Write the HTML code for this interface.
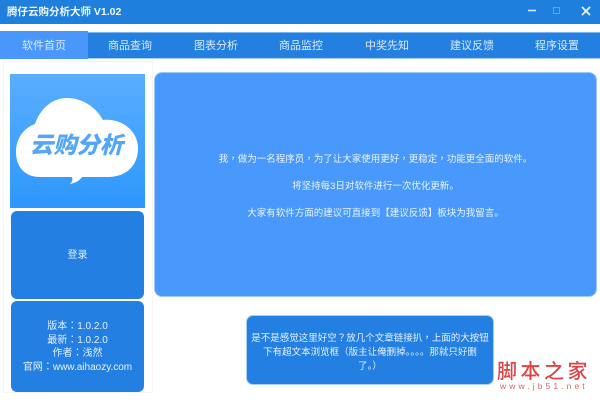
<!DOCTYPE html>
<html><head><meta charset="utf-8"><style>
html,body{margin:0;padding:0;background:#fff}
#r{position:relative;width:600px;height:413px;overflow:hidden;background:#fff;font-family:"Liberation Sans","Noto Sans CJK SC",sans-serif;font-size:10px;color:#e6f1fd;filter:blur(.3px)}
#r div{position:absolute;box-sizing:border-box}
#r i{font-style:normal;font-family:"Noto Sans CJK TC",sans-serif;line-height:0}
.t{top:33px;height:26px;line-height:27px;text-align:center;width:88px;color:#dbe9fa;font-size:11px}
.m{left:155px;width:441px;text-align:center;line-height:16px;color:#eaf3fe;font-size:9.5px;white-space:nowrap}
</style></head><body><div id="r">
<div style="left:0;top:0;width:600px;height:24px;background:#1f7fdc"></div>
<div style="left:7px;top:1px;height:23px;line-height:22px;font-size:10.5px;font-weight:bold;color:#f0f6fd;white-space:nowrap">腾仔云购分析大师 V1.02</div>
<svg style="position:absolute;left:525px;top:0" width="75" height="24">
<path d="M3 10.5H11" stroke="#dcebfb" stroke-width="1.6"/>
<rect x="28.5" y="7.5" width="6" height="6" fill="none" stroke="#5fa5e8"/>
<path d="M57 7L65 15M65 7L57 15" stroke="#e8f2fc" stroke-width="1.8"/>
</svg>
<div style="left:0;top:32px;width:600px;height:27px;background:#2480e0;border-top:1px solid #7db6ef;border-bottom:1px solid #a5cff5"></div>
<div style="left:0;top:31px;width:88px;height:28px;background:#4a97fb"></div>
<div class="t" style="left:0">软件首页</div>
<div class="t" style="left:86px">商品查询</div>
<div class="t" style="left:172px">图表分析</div>
<div class="t" style="left:257px">商品监控</div>
<div class="t" style="left:343px">中奖先知</div>
<div class="t" style="left:428px">建议反馈</div>
<div class="t" style="left:513px">程序设置</div>

<div style="left:3px;top:61px;width:150px;height:332px;border:1px solid #f3f5f8;border-top:1px solid #f0f3f7"></div>
<div style="left:10px;top:74px;width:135px;height:134px;background:linear-gradient(#5aaeff,#2d97fc)"></div>
<svg style="position:absolute;left:10px;top:74px" width="135" height="134">
<path d="M30 103C14 103 6 92 6 78C6 64 14 54 25 50C30 35 42 24 57 24C72 24 86 33 93 46C113 44 128 58 128 74C128 92 116 103 98 103H72C70 106 66 109 60 110C62 108 63 106 62 103Z" fill="#fff"/>
<text x="66.5" y="79" text-anchor="middle" font-family="'Noto Sans CJK SC',sans-serif" font-size="23" font-weight="900" font-style="italic" fill="#55a6f4" textLength="93" lengthAdjust="spacingAndGlyphs">云购分析</text>
</svg>
<div style="left:11px;top:211px;width:133px;height:88px;background:#237fe2;border-radius:6px;text-align:center;line-height:87px;padding-top:1px">登录</div>
<div style="left:11px;top:301px;width:133px;height:91px;background:#237fe2;border-radius:6px;text-align:center;line-height:13.5px;padding-top:19px">版本<i>：</i>1.0.2.0<br>最新<i>：</i>1.0.2.0<br>作者<i>：</i>浅然<br><span style="white-space:nowrap">官网<i>：</i>www.aihaozy.com</span></div>

<div style="left:155px;top:73px;width:441px;height:223px;background:#4899fb;border-radius:7px;box-shadow:0 0 0 1px #9cc8fb"></div>
<div class="m" style="top:152px">我<i>，</i>做为一名程序员<i>，</i>为了让大家使用更好<i>，</i>更稳定<i>，</i>功能更全面的软件。</div>
<div class="m" style="top:179px">将坚持每3日对软件进行一次优化更新。</div>
<div class="m" style="top:206px">大家有软件方面的建议可直接到【建议反馈】板块为我留言。</div>

<div style="left:247px;top:316px;width:246px;height:68px;background:#237fe2;border-radius:6px;box-shadow:0 0 0 1px #a5cff5;text-align:center;line-height:14px;padding:16px 0 0;color:#e6f1fd;font-size:9.5px;white-space:nowrap">是不是感觉这里好空<i>？</i>放几个文章链接扒<i>，</i>上面的大按钮<br>下有超文本浏览框<i>（</i>版主让俺删掉。。。。那就只好删<br>了。<i>）</i></div>

<div style="left:497px;top:357px;width:100px;height:26px;line-height:26px;font-family:'Noto Sans CJK SC',sans-serif;font-weight:500;font-size:20px;letter-spacing:3.5px;color:#dd4446;white-space:nowrap">脚本之家</div>
<div style="left:500px;top:380px;width:100px;height:12px;line-height:12px;font-size:8.5px;letter-spacing:3.1px;color:#c9696b;white-space:nowrap">www.jb51.net</div>
</div></body></html>
